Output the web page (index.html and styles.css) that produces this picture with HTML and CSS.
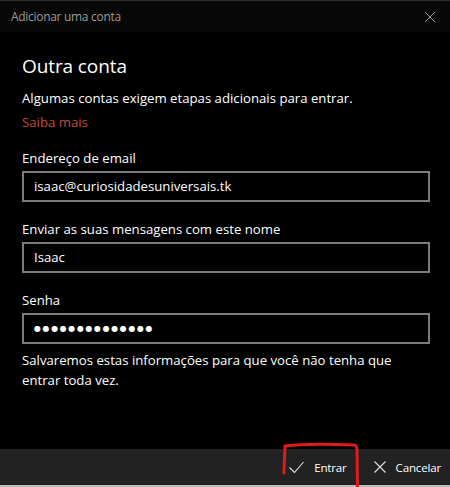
FILE: index.html
```html
<!DOCTYPE html>
<html lang="pt-BR">
<head>
<meta charset="utf-8">
<title>Adicionar uma conta</title>
<link rel="stylesheet" href="styles.css">
</head>
<body>
<div class="window">
  <header class="titlebar">
    <span class="title">Adicionar uma conta</span>
    <svg class="close" width="12" height="12" viewBox="0 0 12 12"><path d="M1 1L11 11M11 1L1 11" stroke="#9a9a9a" stroke-width="1" fill="none"/></svg>
  </header>
  <main class="content">
    <h1 class="heading">Outra conta</h1>
    <p class="intro">Algumas contas exigem etapas adicionais para entrar.</p>
    <a class="link">Saiba mais</a>
    <div class="field">
      <label class="label">Endereço de email</label>
      <div class="input">isaac@curiosidadesuniversais.tk</div>
    </div>
    <div class="field">
      <label class="label">Enviar as suas mensagens com este nome</label>
      <div class="input">Isaac</div>
    </div>
    <div class="field">
      <label class="label">Senha</label>
      <div class="input dots">●●●●●●●●●●●●●●</div>
    </div>
    <p class="note">Salvaremos estas informações para que você não tenha que entrar toda vez.</p>
  </main>
  <footer class="footer">
    <button class="btn btn-ok">
      <svg width="15" height="12" viewBox="0 0 15 12"><path d="M0.5 6.5L5.5 11.5L14.5 1" stroke="#e0e0e0" stroke-width="1.1" fill="none"/></svg>
      <span>Entrar</span>
    </button>
    <button class="btn btn-cancel">
      <svg width="12" height="12" viewBox="0 0 12 12"><path d="M0.5 0.5L11.5 11.5M11.5 0.5L0.5 11.5" stroke="#e0e0e0" stroke-width="1.1" fill="none"/></svg>
      <span>Cancelar</span>
    </button>
    <svg class="annot" width="80" height="46" viewBox="0 0 80 46"><path d="M4 31 C4 22 5 12 5 4 C20 2 50 2 74 3 C76 3 77 5 77 8 L77.5 46" stroke="#e3191b" stroke-width="3" fill="none" stroke-linecap="round"/></svg>
  </footer>
</div>
</body>
</html>
```
FILE: styles.css
```css
* { box-sizing: border-box; }
html, body { margin: 0; padding: 0; background: #000; }
body {
  font-family: "Open Sans", "Noto Sans", "DejaVu Sans", sans-serif;
  color: #fff;
}
.window {
  width: 450px;
  height: 487px;
  display: flex;
  flex-direction: column;
  border-top: 1px solid #2e2e2e;
  background: #000;
}
.titlebar {
  height: 31px;
  background: #070707;
  display: flex;
  align-items: center;
  justify-content: space-between;
  padding: 0 14px 0 11px;
}
.title {
  font-size: 12px;
  color: #9a9a9a;
  letter-spacing: -0.3px;
}
.close { display: block; margin-top: 1px; }
.content {
  padding: 20px 20px 0 22px;
  display: flex;
  flex-direction: column;
}
.heading {
  margin: 0;
  font-size: 19px;
  font-weight: 400;
  line-height: 28px;
  letter-spacing: -0.1px;
}
.intro {
  margin: 8px 0 0;
  font-size: 13.2px;
  line-height: 20px;
}
.link {
  margin-top: 4px;
  font-size: 13.2px;
  line-height: 20px;
  color: #c04a3c;
}
.field {
  margin-top: 16px;
  display: flex;
  flex-direction: column;
}
.field + .field { margin-top: 17px; }
.label {
  font-size: 13.2px;
  line-height: 20px;
}
.input {
  margin-top: 3px;
  height: 31px;
  border: 2px solid #7c7c7c;
  padding: 0 10px;
  font-size: 13.2px;
  line-height: 27px;
}
.dots {
  font-family: "DejaVu Sans", sans-serif;
  font-size: 8px;
  letter-spacing: 1.6px;
}
.note {
  margin: 6px 0 0;
  font-size: 13.2px;
  line-height: 20px;
}
.footer {
  margin-top: auto;
  height: 38px;
  background: #222;
  border-bottom: 2px solid #bdbdbd;
  display: flex;
  justify-content: flex-end;
  align-items: center;
  padding-right: 9px;
  position: relative;
}
.btn {
  background: none;
  border: 0;
  padding: 0;
  display: flex;
  align-items: center;
  gap: 10px;
  color: #fff;
  font-family: inherit;
  font-size: 11.6px;
  letter-spacing: -0.2px;
}
.btn svg { display: block; }
.btn-ok { margin-right: 27px; }
.annot {
  position: absolute;
  left: 280px;
  top: -7px;
}
```
